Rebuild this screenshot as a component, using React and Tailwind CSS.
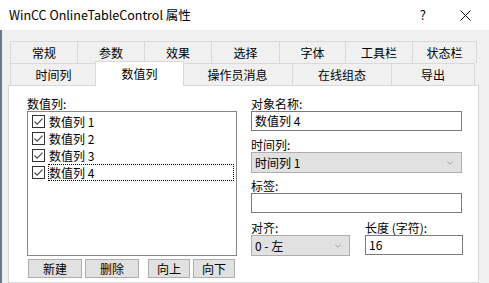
import { ChevronDown } from "lucide-react";

const font = { fontFamily: '"Noto Sans CJK SC", "Noto Sans", sans-serif' };

const topTabs = [
  ["常规", "w-[67px]"],
  ["参数", "w-[67px]"],
  ["效果", "w-[67px]"],
  ["选择", "w-[68px]"],
  ["字体", "w-[66px]"],
  ["工具栏", "w-[67px]"],
  ["状态栏", "w-[65px]"],
];

const Check = () => (
  <span className="w-[13px] h-[13px] border border-[#333] bg-white flex items-center justify-center shrink-0">
    <svg width="11" height="11" viewBox="0 0 11 11">
      <path d="M1.5 5.5 L4.2 8.2 L9.5 2.6" fill="none" stroke="#444" strokeWidth="1.1" />
    </svg>
  </span>
);

const Label = ({ children, className = "" }) => (
  <div className={`h-[14px] leading-[14px] text-[12px] text-black ${className}`}>{children}</div>
);

const Select = ({ value, className }) => (
  <div className={`h-[21px] bg-[#e1e1e1] border border-[#adadad] flex items-center justify-between pl-[3px] pr-[6px] text-[12px] ${className}`}>
    <span>{value}</span>
    <ChevronDown className="w-[10px] h-[10px] text-[#666]" strokeWidth={1.3} />
  </div>
);

const Input = ({ value, className }) => (
  <div className={`h-[20px] bg-white border border-[#7a7a7a] flex items-center pl-[3px] text-[12px] ${className}`}>
    {value}
  </div>
);

const Btn = ({ children, className }) => (
  <button className={`h-[19px] bg-[#e1e1e1] border border-[#adadad] text-[12px] leading-none flex items-center justify-center ${className}`}>
    {children}
  </button>
);

export default function App() {
  const items = ["数值列 1", "数值列 2", "数值列 3", "数值列 4"];
  return (
    <div style={font} className="w-[489px] h-[283px] bg-[#f0f0f0] flex flex-col overflow-hidden text-black">
      <div className="h-[30px] bg-white flex items-center justify-between pl-[9px] shrink-0">
        <span className="text-[12.5px]">WinCC OnlineTableControl 属性</span>
        <div className="flex items-center">
          <span className="text-[13px] mr-[34px]">?</span>
          <svg width="11" height="11" viewBox="0 0 11 11" className="mr-[18px]">
            <path d="M0.5 0.5 L10.5 10.5 M10.5 0.5 L0.5 10.5" stroke="#111" strokeWidth="1" />
          </svg>
        </div>
      </div>
      <div className="flex-1 flex">
        <div className="w-[2px] bg-[#6b7785]" />
        <div className="ml-[6px] w-[471px] flex flex-col pt-[11px]">
          <div className="flex ml-[2px] h-[22px]">
            {topTabs.map(([t, w], i) => (
              <div
                key={t}
                className={`${w} h-[22px] border-t border-l border-[#d9d9d9] flex items-center justify-center text-[12px] ${i === topTabs.length - 1 ? "border-r" : ""}`}
              >
                {t}
              </div>
            ))}
          </div>
          <div className="flex ml-[2px] h-[22px] relative">
            <div className="w-[86px] border-t border-l border-[#d9d9d9] flex items-center justify-center text-[12px]">时间列</div>
            <div className="w-[89px] -mt-[2px] h-[25px] -mx-[1px] border-t border-l border-r border-[#d9d9d9] bg-white relative z-10 flex items-center justify-center text-[12px]">
              数值列
            </div>
            <div className="w-[109px] border-t border-[#d9d9d9] flex items-center justify-center text-[12px]">操作员消息</div>
            <div className="w-[99px] border-t border-l border-[#d9d9d9] flex items-center justify-center text-[12px]">在线组态</div>
            <div className="w-[84px] border-t border-l border-r border-[#d9d9d9] flex items-center justify-center text-[12px]">导出</div>
          </div>
          <div className="flex-1 bg-white border border-[#d9d9d9] pt-[11px] pl-[18px] flex gap-[14px]">
            <div className="flex flex-col w-[210px]">
              <Label>数值列:</Label>
              <div className="h-[145px] border border-[#828790] bg-white pt-[1px] pl-[4px]">
                {items.map((t, i) => (
                  <div key={t} className="h-[17px] flex items-center">
                    <Check />
                    <span
                      className={`ml-[3px] h-[17px] flex items-center pl-[1px] text-[12px] ${i === 3 ? "outline outline-1 outline-dotted outline-black -outline-offset-1 w-[186px]" : ""}`}
                    >
                      {t}
                    </span>
                  </div>
                ))}
              </div>
              <div className="flex mt-[3px] ml-[1px]">
                <Btn className="w-[54px]">新建</Btn>
                <Btn className="w-[54px] ml-[3px]">删除</Btn>
                <Btn className="w-[42px] ml-[9px]">向上</Btn>
                <Btn className="w-[42px] ml-[3px]">向下</Btn>
              </div>
            </div>
            <div className="flex flex-col w-[212px]">
              <Label>对象名称:</Label>
              <Input value="数值列 4" className="w-[211px]" />
              <Label className="mt-[7px]">时间列:</Label>
              <Select value="时间列 1" className="w-[211px]" />
              <Label className="mt-[6px]">标签:</Label>
              <Input value="" className="w-[211px]" />
              <div className="flex mt-[8px]">
                <div className="flex flex-col w-[99px]">
                  <Label>对齐:</Label>
                  <Select value="0 - 左" className="w-[99px]" />
                </div>
                <div className="flex flex-col ml-[15px]">
                  <Label>长度 (字符):</Label>
                  <Input value="16" className="w-[98px]" />
                </div>
              </div>
            </div>
          </div>
        </div>
      </div>
    </div>
  );
}
